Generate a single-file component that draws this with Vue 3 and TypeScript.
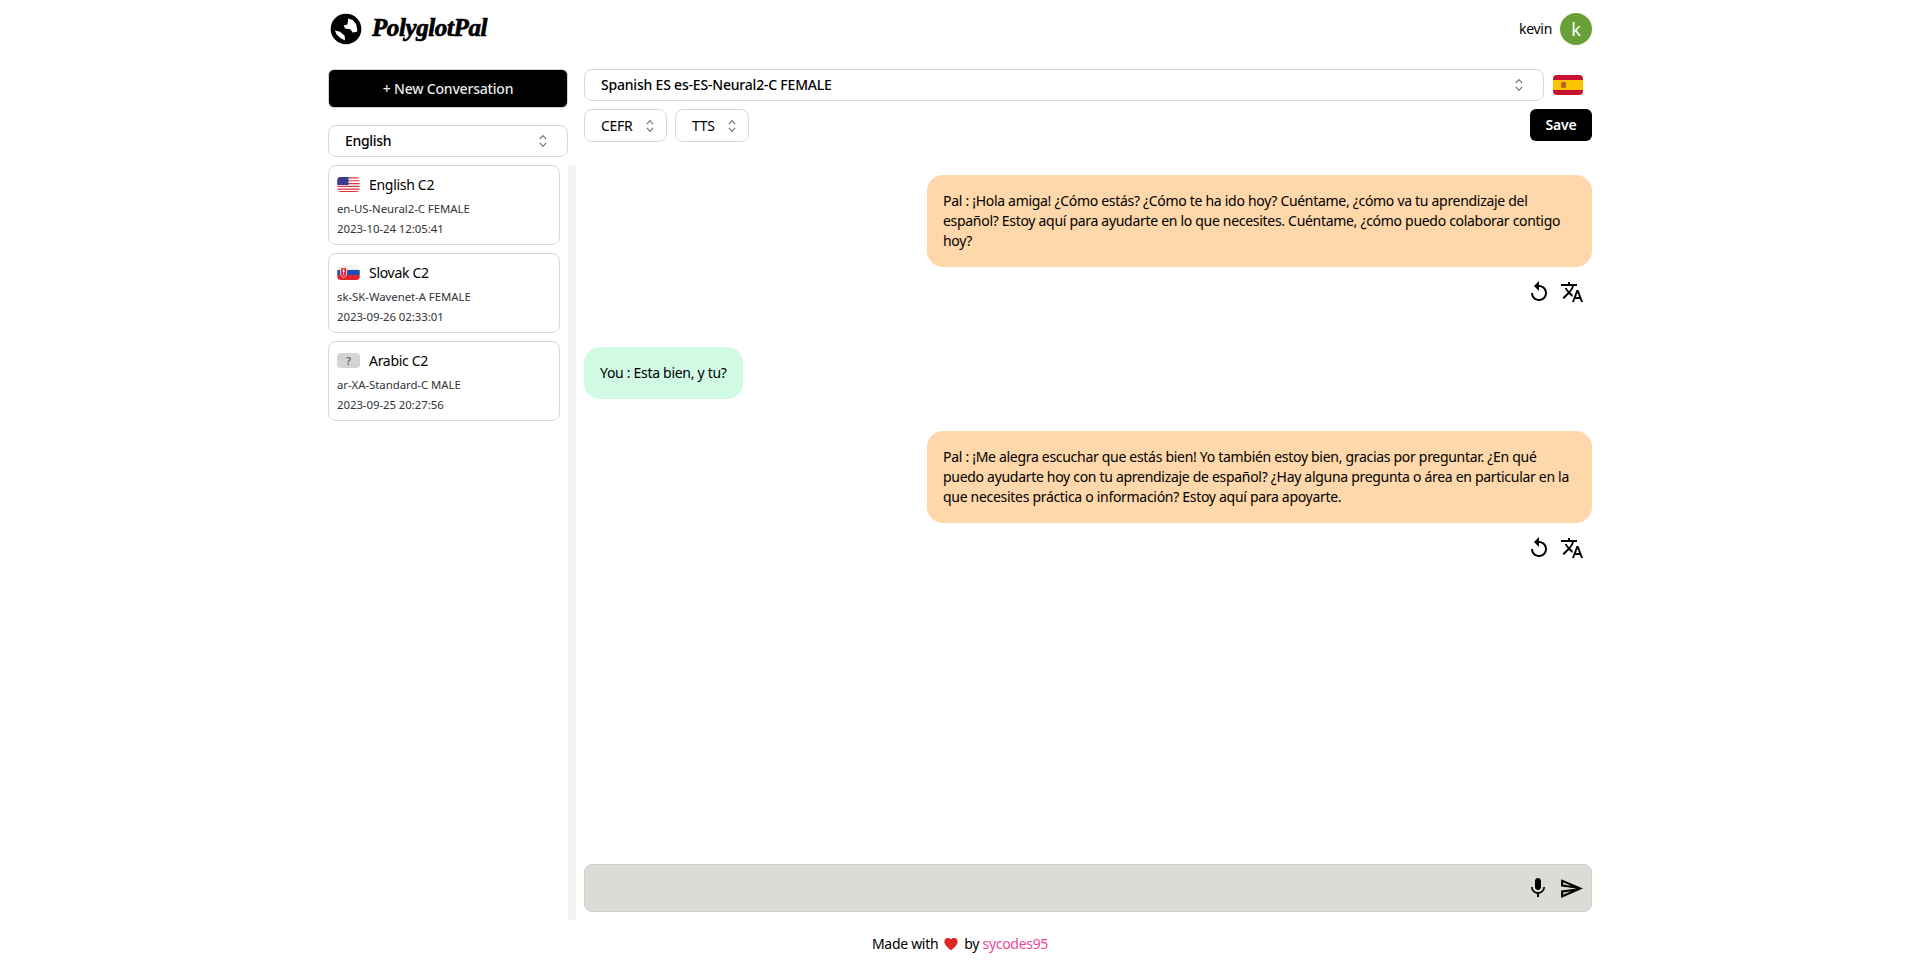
<script setup lang="ts">
// PolyglotPal chat screen
interface Conversation {
  flag: 'us' | 'sk' | 'unknown'
  title: string
  voice: string
  date: string
}

interface Message {
  from: 'pal' | 'you'
  text: string
}

const conversations: Conversation[] = [
  { flag: 'us', title: 'English C2', voice: 'en-US-Neural2-C FEMALE', date: '2023-10-24 12:05:41' },
  { flag: 'sk', title: 'Slovak C2', voice: 'sk-SK-Wavenet-A FEMALE', date: '2023-09-26 02:33:01' },
  { flag: 'unknown', title: 'Arabic C2', voice: 'ar-XA-Standard-C MALE', date: '2023-09-25 20:27:56' },
]

const messages: Message[] = [
  {
    from: 'pal',
    text: 'Pal : ¡Hola amiga! ¿Cómo estás? ¿Cómo te ha ido hoy? Cuéntame, ¿cómo va tu aprendizaje del español? Estoy aquí para ayudarte en lo que necesites. Cuéntame, ¿cómo puedo colaborar contigo hoy?',
  },
  { from: 'you', text: 'You : Esta bien, y tu?' },
  {
    from: 'pal',
    text: 'Pal : ¡Me alegra escuchar que estás bien! Yo también estoy bien, gracias por preguntar. ¿En qué puedo ayudarte hoy con tu aprendizaje de español? ¿Hay alguna pregunta o área en particular en la que necesites práctica o información? Estoy aquí para apoyarte.',
  },
]
</script>

<template>
  <div class="page">
    <header class="topbar">
      <div class="brand">
        <svg class="globe" viewBox="0 0 24 24" width="32" height="32">
          <circle cx="12" cy="12" r="11.500" fill="#000" />
          <path d="M13.500 4.200 17 5.200l2.600 3.300.9 4.300-.3 1.200-3.200.6-1.800-2.500-3.900-.5-1.100-2.300 2.800-.6.500-2.600Z" fill="#fff" />
          <path d="M3.700 13.200 7.500 14l3.500 3 .2 3.400-3.300-1.500-3-3Z" fill="#fff" />
        </svg>
        <span class="logo">PolyglotPal</span>
      </div>
      <div class="user">
        <span>kevin</span>
        <span class="avatar">k</span>
      </div>
    </header>

    <main class="columns">
      <aside class="side">
        <button class="new-btn">+ New Conversation</button>
        <div class="select lang">
          <span>English</span>
          <svg class="chev" viewBox="0 0 12 18" width="10" height="14"><path d="M2 6.500 6 2l4 4.500M2 11.500 6 16l4-4.500" fill="none" stroke="#777" stroke-width="1.500" /></svg>
        </div>
        <div class="side-scroll">
          <ul class="cards">
            <li v-for="c in conversations" :key="c.title" class="card">
              <div class="card-head">
                <svg v-if="c.flag === 'us'" class="mini-flag" viewBox="0 0 24 16">
                  <rect width="24" height="16" fill="#fff" />
                  <path d="M0 1h24M0 4h24M0 7h24M0 10h24M0 13h24M0 15.500h24" stroke="#e0353f" stroke-width="1.300" />
                  <rect width="12" height="8.500" fill="#3a3a90" />
                </svg>
                <svg v-else-if="c.flag === 'sk'" class="mini-flag" viewBox="0 0 24 16">
                  <rect width="24" height="5.300" fill="#f4f4f4" />
                  <rect y="5.300" width="24" height="5.400" fill="#1e50b4" />
                  <rect y="10.700" width="24" height="5.300" fill="#e0252f" />
                  <path d="M3.500 3h6.500v6c0 2.500-1.800 3.500-3.250 4.300C5.300 12.500 3.500 11.500 3.500 9Z" fill="#e0252f" stroke="#fff" stroke-width=".8" />
                  <path d="M6.750 4.500v6M5.300 6.500h2.900" stroke="#fff" stroke-width=".9" />
                </svg>
                <span v-else class="mini-flag unknown">?</span>
                <span class="card-title">{{ c.title }}</span>
              </div>
              <p class="card-line">{{ c.voice }}</p>
              <p class="card-line">{{ c.date }}</p>
            </li>
          </ul>
        </div>
      </aside>

      <section class="chat">
        <div class="controls">
          <div class="voice-row">
            <div class="select voice">
              <span>Spanish ES es-ES-Neural2-C FEMALE</span>
              <svg class="chev" viewBox="0 0 12 18" width="10" height="14"><path d="M2 6.500 6 2l4 4.500M2 11.500 6 16l4-4.500" fill="none" stroke="#777" stroke-width="1.500" /></svg>
            </div>
            <svg class="es-flag" viewBox="0 0 30 20">
              <rect width="30" height="20" rx="4" fill="#c8102e" />
              <rect y="5" width="30" height="10" fill="#fdc400" />
              <rect x="8" y="7" width="5" height="6" rx="1" fill="#b5721f" />
              <rect x="9.500" y="8" width="2" height="3" fill="#c8402e" />
            </svg>
          </div>
          <div class="option-row">
            <div class="select small cefr">
              <span>CEFR</span>
              <svg class="chev" viewBox="0 0 12 18" width="10" height="14"><path d="M2 6.500 6 2l4 4.500M2 11.500 6 16l4-4.500" fill="none" stroke="#777" stroke-width="1.500" /></svg>
            </div>
            <div class="select small tts">
              <span>TTS</span>
              <svg class="chev" viewBox="0 0 12 18" width="10" height="14"><path d="M2 6.500 6 2l4 4.500M2 11.500 6 16l4-4.500" fill="none" stroke="#777" stroke-width="1.500" /></svg>
            </div>
            <button class="save-btn">Save</button>
          </div>
        </div>

        <div class="messages">
          <div v-for="(m, i) in messages" :key="i" class="msg" :class="m.from">
            <div class="bubble">{{ m.text }}</div>
            <div v-if="m.from === 'pal'" class="msg-actions">
              <svg viewBox="0 0 24 24" width="24" height="24">
                <path d="M12 5V1L7 6l5 5V7c3.310 0 6 2.690 6 6s-2.690 6-6 6-6-2.690-6-6H4c0 4.420 3.580 8 8 8s8-3.580 8-8-3.580-8-8-8Z" fill="#000" />
              </svg>
              <svg viewBox="0 0 24 24" width="24" height="24">
                <path d="m12.870 15.070-2.540-2.510.03-.03A17.520 17.520 0 0 0 14.070 6H17V4h-7V2H8v2H1v1.990h11.170C11.500 7.920 10.440 9.750 9 11.350 8.070 10.320 7.300 9.190 6.690 8h-2c.73 1.630 1.730 3.170 2.980 4.560l-5.090 5.020L4 19l5-5 3.110 3.110.76-2.040ZM18.500 10h-2L12 22h2l1.120-3h4.750L21 22h2l-4.500-12Zm-2.620 7 1.620-4.330L19.120 17h-3.240Z" fill="#000" />
              </svg>
            </div>
          </div>
        </div>

        <div class="composer">
          <svg viewBox="0 0 24 24" width="24" height="24">
            <path d="M12 14c1.660 0 3-1.340 3-3V5c0-1.660-1.340-3-3-3S9 3.340 9 5v6c0 1.660 1.340 3 3 3Zm5.300-3c0 3-2.540 5.100-5.300 5.100S6.700 14 6.700 11H5c0 3.410 2.720 6.230 6 6.720V21h2v-3.280c3.280-.48 6-3.300 6-6.720h-1.700Z" fill="#000" />
          </svg>
          <svg viewBox="0 0 24 24" width="25" height="25">
            <path d="M4.010 6.030l7.510 3.220-7.520-1 .01-2.220m7.500 8.720L4 17.970v-2.220l7.510-1M2.010 3 2 10l15 2-15 2 .01 7L23 12 2.010 3Z" fill="#000" />
          </svg>
        </div>
      </section>
    </main>

    <footer class="foot">
      <span>Made with</span>
      <svg viewBox="0 0 24 24" width="16" height="16">
        <path d="M12 21.500 10.500 20.200C5.400 15.500 2 12.400 2 8.500 2 5.400 4.400 3 7.500 3c1.700 0 3.400.8 4.500 2.100C13.100 3.800 14.800 3 16.500 3 19.600 3 22 5.400 22 8.500c0 3.900-3.400 7-8.500 11.700L12 21.500Z" fill="#dc2626" />
      </svg>
      <span>by <a class="author">sycodes95</a></span>
    </footer>
  </div>
</template>

<style scoped>
.page {
  width: 1264px;
  height: 967px;
  margin: 0 auto;
  display: flex;
  flex-direction: column;
  font-family: 'Noto Sans', 'Open Sans', sans-serif;
  font-size: 14px;
  letter-spacing: -0.3px;
  color: #000;
  background: #fff;
}
.topbar {
  height: 69px;
  flex: none;
  display: flex;
  justify-content: space-between;
  align-items: flex-start;
  padding-top: 13px;
  box-sizing: border-box;
}
.brand {
  display: flex;
  align-items: center;
  gap: 10px;
  margin-left: 2px;
  height: 32px;
}
.logo {
  font-family: 'Liberation Serif', serif;
  font-weight: 700;
  font-style: italic;
  font-size: 25px;
  letter-spacing: -0.4px;
  -webkit-text-stroke: 0.7px #000;
  position: relative;
  top: -1px;
}
.user {
  display: flex;
  align-items: center;
  gap: 8px;
  height: 32px;
}
.user > span:first-child {
  padding-bottom: 2px;
}
.avatar {
  width: 32px;
  height: 32px;
  border-radius: 50%;
  background: #689f38;
  color: #fff;
  font-size: 18px;
  display: flex;
  align-items: center;
  justify-content: center;
}
.columns {
  flex: 1;
  min-height: 0;
  display: flex;
  gap: 8px;
}
.side {
  width: 248px;
  flex: none;
  display: flex;
  flex-direction: column;
}
.new-btn {
  height: 39px;
  width: 240px;
  flex: none;
  padding: 0 0 1px;
  background: #000;
  color: #e8e8e8;
  border: 1px solid #d4d4d4;
  border-radius: 6px;
  font: 500 14px 'Noto Sans', sans-serif;
  letter-spacing: -0.2px;
}
.select {
  box-sizing: border-box;
  border: 1px solid #d9d9d9;
  border-radius: 8px;
  background: #fff;
  display: flex;
  align-items: center;
  justify-content: space-between;
  padding: 0 19px 2px 16px;
  font-weight: 500;
}
.chev {
  position: relative;
  top: 1px;
}
.lang {
  width: 240px;
  height: 32px;
  margin-top: 17px;
  flex: none;
}
.voice {
  letter-spacing: -0.2px;
}
.side-scroll {
  margin-top: 8px;
  height: 755px;
  flex: none;
  border-right: 8px solid #f3f3f3;
  border-radius: 4px;
  width: 248px;
  box-sizing: border-box;
  overflow: hidden;
}
.cards {
  list-style: none;
  margin: 0;
  padding: 0;
  display: flex;
  flex-direction: column;
  gap: 8px;
  width: 232px;
}
.card {
  box-sizing: border-box;
  height: 80px;
  border: 1px solid #d9d9d9;
  border-radius: 8px;
  padding: 8px;
}
.card-head {
  display: flex;
  align-items: center;
  gap: 8px;
  height: 20px;
  margin-bottom: 5px;
}
.mini-flag {
  width: 23px;
  height: 15px;
  border-radius: 4px;
  flex: none;
}
.unknown {
  background: #d4d4d4;
  color: #666;
  font-size: 11px;
  font-weight: 600;
  line-height: 15px;
  text-align: center;
}
.card-title {
  font-size: 14px;
  margin-left: 1px;
}
.card-line {
  margin: 0;
  font-size: 11.4px;
  line-height: 20px;
  letter-spacing: -0.05px;
  color: #333;
}
.chat {
  flex: 1;
  min-width: 0;
  display: flex;
  flex-direction: column;
}
.controls {
  flex: none;
  display: flex;
  flex-direction: column;
  gap: 8px;
}
.voice-row {
  display: flex;
  align-items: center;
  gap: 9px;
}
.voice {
  width: 960px;
  height: 32px;
}
.es-flag {
  width: 30px;
  height: 20px;
}
.option-row {
  display: flex;
  align-items: center;
  gap: 8px;
}
.small {
  height: 33px;
  padding-right: 11px;
  padding-bottom: 1px;
  font-weight: 400;
}
.cefr {
  width: 83px;
}
.tts {
  width: 74px;
}
.save-btn {
  margin-left: auto;
  margin-top: -1px;
  width: 62px;
  height: 32px;
  padding: 0 0 1px;
  background: #000;
  color: #fff;
  border: none;
  border-radius: 6px;
  font: 600 14px 'Noto Sans', sans-serif;
  letter-spacing: -0.2px;
}
.messages {
  flex: 1;
  min-height: 0;
  padding-top: 33px;
  display: flex;
  flex-direction: column;
}
.msg {
  display: flex;
  flex-direction: column;
}
.msg.pal {
  align-items: flex-end;
  margin-bottom: 42px;
}
.msg.you {
  align-items: flex-start;
  margin-bottom: 32px;
}
.bubble {
  box-sizing: border-box;
  border-radius: 16px;
  padding: 16px;
  line-height: 20px;
}
.pal .bubble {
  width: 665px;
  background: #fed7aa;
}
.you .bubble {
  background: #d1fae5;
}
.msg-actions {
  display: flex;
  align-items: center;
  gap: 9px;
  margin-top: 12px;
  margin-right: 8px;
  height: 26px;
}
.composer {
  flex: none;
  box-sizing: border-box;
  height: 48px;
  margin-bottom: 8px;
  border: 1px solid #cfcfca;
  border-radius: 8px;
  background: #dcdcd7;
  display: flex;
  justify-content: flex-end;
  align-items: center;
  gap: 9px;
  padding-right: 7px;
}
.foot {
  flex: none;
  height: 47px;
  display: flex;
  justify-content: center;
  align-items: center;
  gap: 5px;
  padding-bottom: 0;
}
.author {
  color: #ec4899;
}
</style>

<style>
html,
body {
  margin: 0;
  background: #fff;
}
</style>
